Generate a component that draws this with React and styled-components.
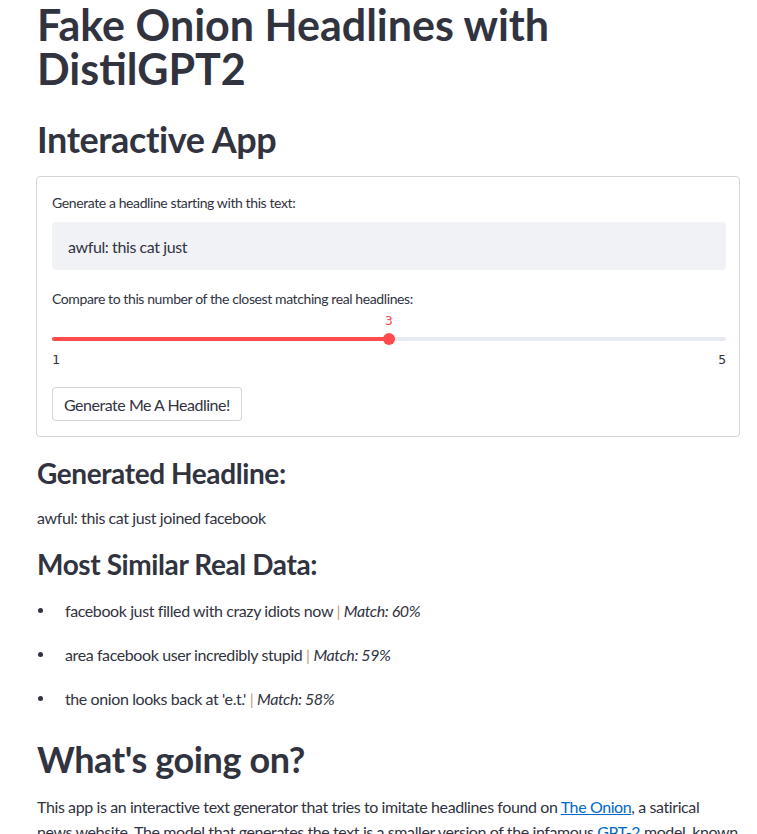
import React from 'react';
import styled, { createGlobalStyle } from 'styled-components';

const GlobalStyle = createGlobalStyle`
  html, body {
    margin: 0;
    padding: 0;
    background: #ffffff;
  }
  body {
    font-family: Lato, "Noto Sans", sans-serif;
    color: #31333f;
    letter-spacing: -0.025em;
    -webkit-font-smoothing: antialiased;
  }
`;

const Main = styled.main`
  padding: 0 17px 0 37px;
  box-sizing: border-box;
  width: 757px;
`;

const Title = styled.h1`
  margin: 0;
  padding-top: 3px;
  font-size: 43px;
  line-height: 44px;
  font-weight: 700;
  letter-spacing: 0;
  color: #31333f;
`;

const Heading = styled.h2`
  margin: ${(p) => p.$top}px 0 0;
  font-size: 36px;
  line-height: 1.2;
  font-weight: 700;
  color: #31333f;
`;

const SubHeading = styled.h3`
  margin: ${(p) => p.$top}px 0 0;
  font-size: 28px;
  line-height: 1.2;
  font-weight: 700;
  color: #31333f;
`;

const Card = styled.section`
  margin: 15px 0 0 -1px;
  border: 1px solid rgba(49, 51, 63, 0.2);
  border-radius: 4px;
  padding: 16px 13px 15px 15px;
  display: flex;
  flex-direction: column;
`;

const Label = styled.label`
  font-size: 14px;
  line-height: 20px;
  color: #31333f;
  margin-top: ${(p) => p.$top || 0}px;
`;

const TextInput = styled.div`
  margin-top: 9px;
  height: 48px;
  background: #f0f2f6;
  border-radius: 4px;
  display: flex;
  align-items: center;
  padding: 0 16px;
  font-size: 16px;
`;

const SliderWrap = styled.div`
  position: relative;
  margin-top: 6px;
  height: 70px;
`;

const Track = styled.div`
  position: absolute;
  left: 0;
  right: 0;
  top: 22px;
  height: 4px;
  border-radius: 2px;
  background: #e6eaf1;
`;

const Fill = styled.div`
  height: 100%;
  border-radius: 2px;
  background: #ff4b4b;
`;

const Thumb = styled.div`
  position: absolute;
  top: 18px;
  width: 12px;
  height: 12px;
  margin-left: -6px;
  border-radius: 50%;
  background: #ff4b4b;
`;

const ThumbValue = styled.div`
  position: absolute;
  top: -20px;
  left: 6px;
  transform: translateX(-50%);
  font-family: "DejaVu Sans Mono", monospace;
  font-size: 13px;
  line-height: 16px;
  letter-spacing: 0;
  color: #ff4b4b;
`;

const TickRow = styled.div`
  position: absolute;
  left: 0;
  right: 0;
  top: 37px;
  display: flex;
  justify-content: space-between;
  font-family: "DejaVu Sans Mono", monospace;
  font-size: 13px;
  line-height: 16px;
  letter-spacing: 0;
  color: #31333f;
`;

const Button = styled.button`
  align-self: flex-start;
  margin-top: 2px;
  height: 34px;
  padding: 0 11px;
  background: #ffffff;
  border: 1px solid rgba(49, 51, 63, 0.2);
  border-radius: 4px;
  font-family: Lato, "Noto Sans", sans-serif;
  font-size: 16px;
  letter-spacing: -0.03em;
  color: #31333f;
`;

const Text = styled.p`
  margin: ${(p) => p.$top}px 0 0;
  font-size: 16px;
  line-height: 25.6px;
  color: #31333f;
`;

const List = styled.ul`
  margin: 16px 0 0;
  padding: 0;
  list-style: none;
  display: flex;
  flex-direction: column;
  gap: 18.4px;
`;

const Item = styled.li`
  position: relative;
  padding-left: 28px;
  font-size: 16px;
  line-height: 25.6px;

  &::before {
    content: '';
    position: absolute;
    left: 1px;
    top: 10px;
    width: 5px;
    height: 5px;
    border-radius: 50%;
    background: #31333f;
  }
`;

const Pipe = styled.span`
  color: #c99a78;
`;

const Link = styled.a`
  color: #0068c9;
  text-decoration: ${(p) => (p.$under ? 'underline' : 'none')};
`;

const matches = [
  { text: 'facebook just filled with crazy idiots now', score: 60 },
  { text: 'area facebook user incredibly stupid', score: 59 },
  { text: "the onion looks back at 'e.t.'", score: 58 },
];

const Slider = ({ min, max, value }) => {
  const pct = ((value - min) / (max - min)) * 100;
  return (
    <SliderWrap>
      <Track>
        <Fill style={{ width: `${pct}%` }} />
      </Track>
      <Thumb style={{ left: `${pct}%` }}>
        <ThumbValue>{value}</ThumbValue>
      </Thumb>
      <TickRow>
        <span>{min}</span>
        <span>{max}</span>
      </TickRow>
    </SliderWrap>
  );
};

export default function App() {
  return (
    <>
      <GlobalStyle />
      <Main>
        <Title>
          Fake Onion Headlines with
          <br />
          DistilGPT2
        </Title>
        <Heading $top={27}>Interactive App</Heading>
        <Card>
          <Label>Generate a headline starting with this text:</Label>
          <TextInput>awful: this cat just</TextInput>
          <Label $top={19}>
            Compare to this number of the closest matching real headlines:
          </Label>
          <Slider min={1} max={5} value={3} />
          <Button>Generate Me A Headline!</Button>
        </Card>
        <SubHeading $top={20}>Generated Headline:</SubHeading>
        <Text $top={14}>awful: this cat just joined facebook</Text>
        <SubHeading $top={18}>Most Similar Real Data:</SubHeading>
        <List>
          {matches.map((m) => (
            <Item key={m.text}>
              {m.text} <Pipe>|</Pipe> <em>Match: {m.score}%</em>
            </Item>
          ))}
        </List>
        <Heading $top={26}>What's going on?</Heading>
        <Text $top={13}>
          This app is an interactive text generator that tries to imitate
          headlines found on <Link $under href="#">The Onion</Link>, a satirical
          <br />
          news website. The model that generates the text is a smaller version
          of the infamous <Link href="#">GPT-2</Link> model, known
        </Text>
      </Main>
    </>
  );
}
